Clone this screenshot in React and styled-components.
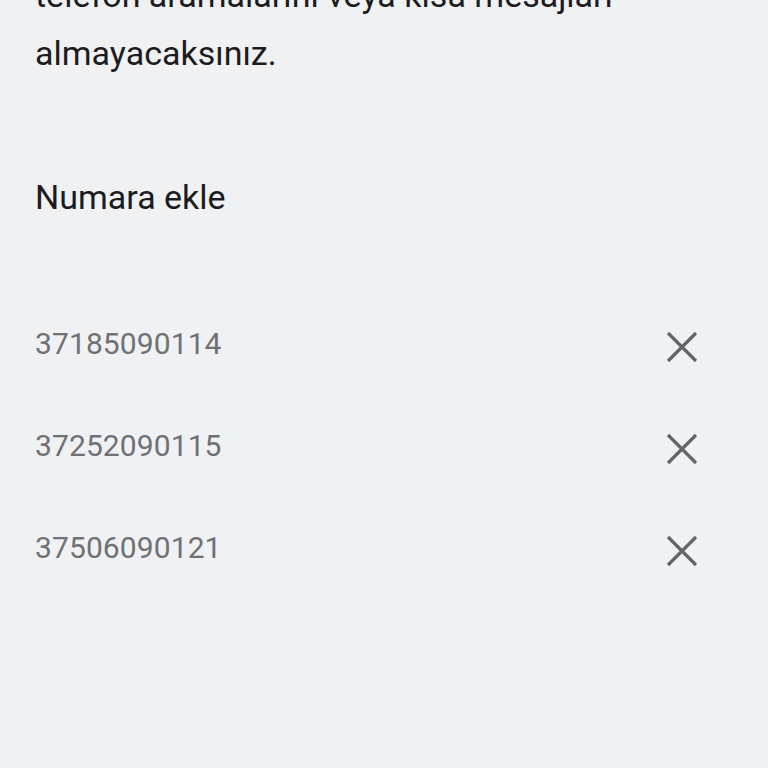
import React from "react";
import styled, { createGlobalStyle } from "styled-components";

const Global = createGlobalStyle`
  html, body {
    margin: 0;
    padding: 0;
    background: #f0f1f3;
    overflow: hidden;
  }
  body {
    font-family: Roboto, "Noto Sans", sans-serif;
  }
`;

const Page = styled.div`
  width: 768px;
  height: 768px;
  background: #f0f1f3;
  padding: 0 62px 0 35px;
  box-sizing: border-box;
  overflow: hidden;
`;

const Notice = styled.p`
  margin: -34px 0 0 0;
  font-size: 34px;
  line-height: 58px;
  color: #1c1c1e;
  width: 640px;
`;

const Heading = styled.div`
  margin-top: 95px;
  font-size: 34px;
  line-height: 40px;
  color: #1c1c1e;
`;

const List = styled.div`
  margin-top: 75px;
  display: flex;
  flex-direction: column;
`;

const Row = styled.div`
  height: 102px;
  display: flex;
  align-items: center;
  justify-content: space-between;
`;

const Number = styled.span`
  font-size: 30px;
  color: #6f7174;
  letter-spacing: 0.1px;
`;

const RemoveButton = styled.button`
  width: 48px;
  height: 48px;
  margin-top: 8px;
  border: 0;
  padding: 0;
  background: transparent;
  display: flex;
  align-items: center;
  justify-content: center;
  cursor: pointer;
`;

function CloseIcon() {
  return (
    <svg width="32" height="32" viewBox="0 0 32 32">
      <path
        d="M2 2 L30 30 M30 2 L2 30"
        stroke="#636568"
        strokeWidth="3.2"
        fill="none"
      />
    </svg>
  );
}

const numbers = ["37185090114", "37252090115", "37506090121"];

export default function App() {
  return (
    <>
      <Global />
      <Page>
        <Notice>
          telefon aramalarını veya kısa mesajları almayacaksınız.
        </Notice>
        <Heading>Numara ekle</Heading>
        <List>
          {numbers.map((n) => (
            <Row key={n}>
              <Number>{n}</Number>
              <RemoveButton aria-label="Kaldır">
                <CloseIcon />
              </RemoveButton>
            </Row>
          ))}
        </List>
      </Page>
    </>
  );
}
